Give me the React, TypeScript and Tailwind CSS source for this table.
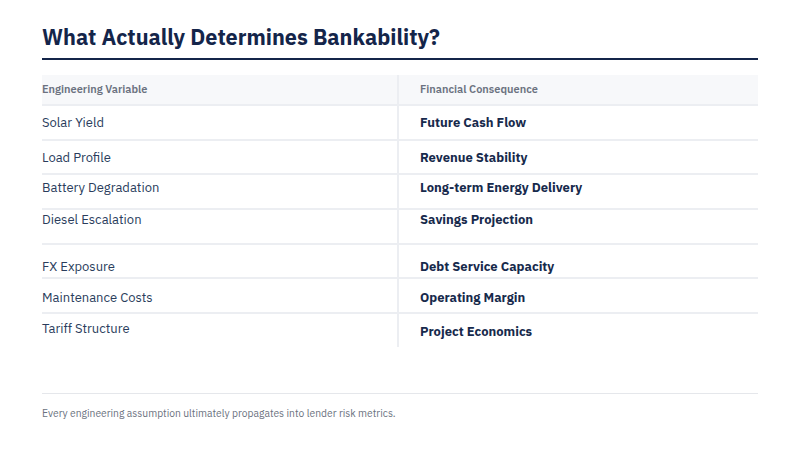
const rows = [
  { left: "Solar Yield", right: "Future Cash Flow", lp: "pt-[8px]", rp: "pt-[8px]" },
  { left: "Load Profile", right: "Revenue Stability", lp: "pt-[8px]", rp: "pt-[8px]" },
  { left: "Battery Degradation", right: "Long-term Energy Delivery", lp: "pt-[4px]", rp: "pt-[4px]" },
  { left: "Diesel Escalation", right: "Savings Projection", lp: "pt-[1px]", rp: "pt-[1px]" },
  { left: "FX Exposure", right: "Debt Service Capacity", lp: "pt-[13px]", rp: "pt-[13px]" },
  { left: "Maintenance Costs", right: "Operating Margin", lp: "pt-[10px]", rp: "pt-[10px]" },
  { left: "Tariff Structure", right: "Project Economics", lp: "pt-[6px]", rp: "pt-[9px]" },
];

export default function App() {
  return (
    <div
      className="w-[800px] h-[450px] bg-white px-[42px] flex flex-col"
      style={{ fontFamily: '"IBM Plex Sans", Inter, "Noto Sans", sans-serif' }}
    >
      <div className="pt-[22px] pb-[6px] border-b-2 border-[#14254a]">
        <h1 className="text-[21.6px] leading-[30px] font-bold text-[#14254a]">
          What Actually Determines Bankability?
        </h1>
      </div>

      <div className="mt-[15px]">
        {/* Header */}
        <div className="grid grid-cols-[357px_1fr] h-[29px] bg-[#f7f8fa] text-[11px] font-semibold text-[#6b7280]">
          <div className="flex items-center border-r-2 border-[#eceef2]">Engineering Variable</div>
          <div className="flex items-center pl-[21px]">Financial Consequence</div>
        </div>

        {rows.map((r) => (
          <div key={r.left} className="grid grid-cols-[357px_1fr] h-[34.7px] border-t-2 border-[#eceef2]">
            <div className={`border-r-2 border-[#eceef2] text-[13px] leading-[18px] text-[#2a3d5c] ${r.lp}`}>
              {r.left}
            </div>
            <div className={`pl-[21px] text-[13px] leading-[18px] font-bold text-[#172a4c] ${r.rp}`}>
              {r.right}
            </div>
          </div>
        ))}
      </div>

      <div className="mt-[46px] border-t border-[#e5e7eb] pt-[11px]">
        <p className="text-[10.3px] leading-[16px] text-[#6b7280]">
          Every engineering assumption ultimately propagates into lender risk metrics.
        </p>
      </div>
    </div>
  );
}
